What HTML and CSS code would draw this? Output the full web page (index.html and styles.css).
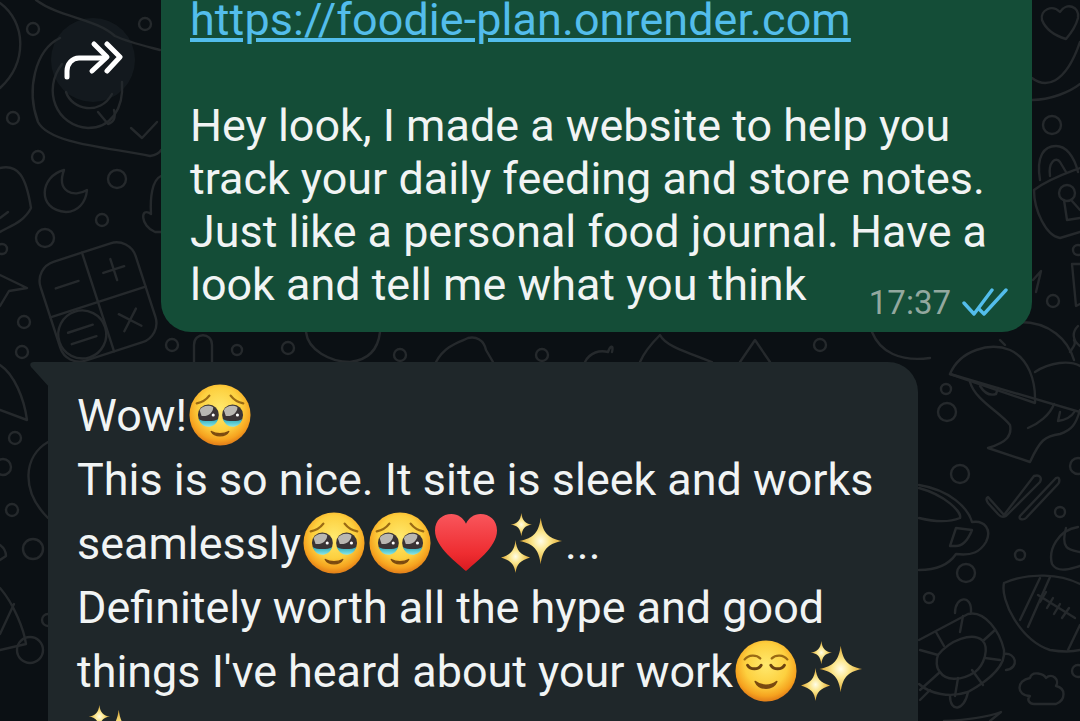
FILE: index.html
```html
<!DOCTYPE html>
<html lang="en">
<head>
    <meta charset="UTF-8">
    <title>Chat</title>
    <link rel="stylesheet" href="styles.css">
</head>
<body>

    <!-- Emoji set, reused by the messages -->
    <svg class="defs" width="0" height="0" aria-hidden="true">
        <defs>
            <radialGradient id="skin" cx="50%" cy="40%" r="58%">
                <stop offset="0" stop-color="#ffe96e"/>
                <stop offset="0.6" stop-color="#fdd03f"/>
                <stop offset="0.88" stop-color="#f6a31f"/>
                <stop offset="1" stop-color="#e5841a"/>
            </radialGradient>
            <linearGradient id="tear" x1="0" y1="0" x2="0" y2="1">
                <stop offset="0" stop-color="#27a7b8"/>
                <stop offset="1" stop-color="#8be6e6"/>
            </linearGradient>
            <linearGradient id="red" x1="0" y1="0" x2="0" y2="1">
                <stop offset="0" stop-color="#f9565c"/>
                <stop offset="0.7" stop-color="#ee2c30"/>
                <stop offset="1" stop-color="#d81a20"/>
            </linearGradient>
            <radialGradient id="spark" cx="50%" cy="50%" r="50%">
                <stop offset="0" stop-color="#fffde8"/>
                <stop offset="0.4" stop-color="#fbe68c"/>
                <stop offset="1" stop-color="#dca52e"/>
            </radialGradient>
            <symbol id="e-plead" viewBox="0 0 64 64">
                <circle cx="32" cy="32" r="31.5" fill="url(#skin)"/>
                <path d="M8 20C13 19 18 16 21 12M56 20C51 19 46 16 43 12" fill="none" stroke="#9a6a14" stroke-width="2.4" stroke-linecap="round"/>
                <circle cx="20" cy="32" r="10.8" fill="#3a3436"/>
                <circle cx="45" cy="32" r="10.8" fill="#3a3436"/>
                <path d="M11 27C13 23 20 21 25 24C25 30 19 34 13 33Z" fill="#b9b7b2"/>
                <path d="M36 27C38 23 45 21 50 24C50 30 44 34 38 33Z" fill="#b9b7b2"/>
                <circle cx="25" cy="32" r="1.6" fill="#fff"/>
                <circle cx="50" cy="32" r="1.6" fill="#fff"/>
                <path d="M10 36C14 39 26 39 30 36C28 42 24 44 20 44C15 44 12 41 10 36Z" fill="url(#tear)"/>
                <path d="M35 36C39 39 51 39 55 36C53 42 49 44 45 44C40 44 37 41 35 36Z" fill="url(#tear)"/>
                <path d="M23 49C28 52 36 52 41 49C38 55 26 55 23 49Z" fill="#7a4a10" stroke="#7a4a10" stroke-width="1.4" stroke-linejoin="round"/>
            </symbol>
            <symbol id="e-relieved" viewBox="0 0 64 64">
                <circle cx="32" cy="32" r="31.5" fill="url(#skin)"/>
                <path d="M10 20C14 15 22 15 26 19M38 19C42 15 50 15 54 20" fill="none" stroke="#9a6a14" stroke-width="2.4" stroke-linecap="round"/>
                <path d="M13 26C16 31 24 31 27 26M37 26C40 31 48 31 51 26" fill="none" stroke="#6b4210" stroke-width="3" stroke-linecap="round"/>
                <path d="M21 43C27 48 37 48 43 43C39 52 25 52 21 43Z" fill="#7a4a10" stroke="#7a4a10" stroke-width="1.8" stroke-linejoin="round"/>
            </symbol>
            <symbol id="e-heart" viewBox="0 0 64 64">
                <path d="M32 61C24 53 0 37 0 19C0 8 8 2 17 2C24 2 29 6 32 12C35 6 40 2 47 2C56 2 64 8 64 19C64 37 40 53 32 61Z" fill="url(#red)"/>
            </symbol>
            <symbol id="e-spark" viewBox="0 0 64 64">
                <path d="M21 1C22 9 25 12 32 13C25 14 22 17 21 25C20 17 17 14 10 13C17 12 20 9 21 1Z" fill="url(#spark)"/>
                <path d="M41 6C43 21 48 27 63 30C48 33 43 39 41 54C39 39 34 33 19 30C34 27 39 21 41 6Z" fill="url(#spark)"/>
                <path d="M15 29C16 40 20 44 30 47C20 50 16 54 15 63C14 54 10 50 0 47C10 44 14 40 15 29Z" fill="url(#spark)"/>
            </symbol>
        </defs>
    </svg>

    <!-- Wallpaper doodles -->
    <svg class="wallpaper" viewBox="0 0 1080 721" aria-hidden="true">
        <g fill="none" stroke="#25292c" stroke-width="2.4" stroke-linecap="round" stroke-linejoin="round">
            <!-- top left -->
            <path d="M0 3C26 22 28 62 0 88"/>
            <path d="M36 0C60 18 95 18 115 36C128 42 145 46 160 50"/>
            <path d="M60 38C35 50 26 90 38 122C50 145 115 148 150 156C156 155 160 152 161 150"/>
            <path d="M62 64C42 90 56 126 88 128C110 128 124 110 122 82"/>
            <path d="M66 92C72 110 100 116 112 94"/>
            <path d="M98 112L108 124C114 122 116 118 114 110"/>
            <path d="M131 128L142 138L157 122"/>
            <path d="M64 170C40 176 36 210 66 212C78 212 86 202 87 190C74 198 56 192 64 170Z"/>
            <path d="M0 168C18 164 26 176 31 208C24 222 10 226 0 232"/>
            <path d="M0 218L8 212"/>
            <path d="M161 176C152 180 150 198 151 214C140 206 140 226 155 232L161 232"/>
            <circle cx="33" cy="29" r="6"/><circle cx="145" cy="24" r="6"/><circle cx="13" cy="118" r="6"/>
            <circle cx="38" cy="157" r="6"/><circle cx="117" cy="179" r="9"/><circle cx="102" cy="220" r="6"/>
            <circle cx="45" cy="238" r="9"/><circle cx="24" cy="322" r="6"/><circle cx="2" cy="249" r="5"/>
            <circle cx="22" cy="352" r="6"/>
            <path d="M0 275L27 288L9 291L0 306"/>
            <!-- calculator -->
            <g transform="rotate(-18 98 302)">
                <rect x="48" y="250" width="100" height="104" rx="20"/>
                <path d="M98 250V354M48 302H148"/>
                <path d="M62 276H86M112 276H134M123 265V287"/>
                <path d="M114 320L132 338M132 320L114 338"/>
                <circle cx="73" cy="328" r="24"/>
                <path d="M60 322H86M60 334H86"/>
            </g>
            <!-- gap between the bubbles -->
            <circle cx="172" cy="345" r="6"/><circle cx="237" cy="350" r="5"/><circle cx="288" cy="348" r="6"/>
            <circle cx="400" cy="355" r="6"/><circle cx="542" cy="355" r="6"/><circle cx="820" cy="345" r="6"/>
            <path d="M194 362V345C194 332 212 332 212 345V362"/>
            <path d="M306 332C308 350 330 362 350 362C368 360 378 350 380 332"/>
            <path d="M436 362C445 345 460 342 468 338C476 336 484 340 486 350L493 362"/>
            <path d="M585 362C590 352 600 350 608 352C610 346 614 344 612 352"/>
            <path d="M640 362C645 350 655 340 660 335C665 345 680 350 712 362"/>
            <path d="M740 362L755 340L770 362"/>
            <path d="M872 332C880 352 900 362 930 358"/>
            <!-- left of the grey bubble -->
            <path d="M0 365C14 374 24 398 27 420L0 410"/>
            <path d="M48 442C24 456 20 490 48 518"/>
            <circle cx="15" cy="438" r="6"/><circle cx="12" cy="510" r="6"/><circle cx="33" cy="549" r="10"/>
            <circle cx="30" cy="650" r="13"/><circle cx="3" cy="467" r="8"/><circle cx="48" cy="620" r="6"/>
            <path d="M0 588C14 604 24 630 26 644L0 650M14 604L0 634"/>
            <path d="M0 545C4 548 6 552 6 556L0 560"/>
            <!-- top right -->
            <path d="M1042 20C1040 10 1052 4 1060 12C1066 2 1080 6 1078 18C1076 26 1072 32 1066 39C1056 36 1046 30 1042 20Z"/>
            <path d="M1032 78C1045 88 1065 86 1080 42M1032 100C1050 100 1070 92 1080 84"/>
            <circle cx="1052" cy="125" r="9"/>
            <path d="M1040 180C1036 156 1044 146 1056 146C1066 146 1074 156 1078 172"/>
            <path d="M1050 176C1048 162 1056 156 1060 162L1066 172"/>
            <path d="M1034 190C1050 178 1070 172 1080 168M1034 190C1034 210 1046 236 1060 238L1080 232"/>
            <circle cx="1067" cy="193" r="8"/>
            <path d="M1064 200L1067 220L1080 218M1072 201L1080 210"/>
            <path d="M1033 280L1041 271L1036 292"/>
            <circle cx="1053" cy="301" r="6"/>
            <path d="M1072 264L1076 306L1080 304M1072 264H1080"/>
            <circle cx="1078" cy="250" r="5"/>
            <path d="M1020 322C1050 322 1068 340 1074 360"/>
            <path d="M1078 326C1072 332 1072 340 1080 346"/>
            <!-- right of the grey bubble -->
            <path d="M950 374C960 350 990 342 1010 350C1028 358 1036 380 1035 403Z"/>
            <path d="M950 374L1080 412"/>
            <path d="M1035 372C1050 362 1070 360 1080 366"/>
            <path d="M970 382C975 400 1000 412 1010 425C1012 435 1008 442 988 448L1030 462C1040 440 1045 436 1060 434C1072 430 1076 424 1080 410"/>
            <path d="M980 386C985 394 990 396 996 394L998 388"/>
            <path d="M1028 428C1038 424 1050 415 1054 404M1060 412L1058 421C1066 420 1072 416 1075 411"/>
            <path d="M1005 345L1000 340M1070 352C1074 346 1076 344 1074 340"/>
            <circle cx="946" cy="389" r="5"/><circle cx="947" cy="412" r="9"/><circle cx="960" cy="474" r="9"/>
            <circle cx="1060" cy="512" r="5"/><circle cx="1020" cy="555" r="5"/><circle cx="966" cy="573" r="9"/>
            <circle cx="929" cy="598" r="5"/><circle cx="1078" cy="466" r="8"/><circle cx="1078" cy="671" r="6"/>
            <path d="M988 497L1004 515L1034 476C1040 474 1042 478 1040 482L1006 516C1002 518 1000 516 998 514L988 503C986 500 986 498 988 497Z"/>
            <path d="M1020 516L1056 478C1060 476 1060 482 1058 484L1026 518C1024 520 1018 520 1020 516Z"/>
            <path d="M1078 527C1058 530 1048 550 1052 564C1058 574 1072 568 1080 566"/>
            <path d="M1066 528C1060 550 1070 550 1080 552"/>
            <path d="M919 485C950 490 968 508 972 522C985 520 992 530 986 542C980 552 972 556 956 554C948 566 934 570 919 570"/>
            <path d="M919 488C945 495 962 512 960 518C950 522 935 522 919 518"/>
            <path d="M956 528L972 530C968 540 962 546 956 546L950 546Z"/>
            <!-- football -->
            <path d="M1004 583C1030 572 1060 574 1080 584M1004 583C1000 600 1020 640 1050 650C1062 652 1072 652 1080 650"/>
            <path d="M1020 620L1040 578M1028 627L1050 577"/>
            <path d="M1038 595L1075 618M1046 592L1040 602M1053 598L1047 608M1060 604L1054 614M1069 608L1062 618"/>
            <path d="M1080 625L1068 650"/>
            <!-- cloud -->
            <path d="M1030 696C1016 696 1016 680 1030 678C1032 670 1044 674 1046 678C1052 672 1060 680 1056 686C1066 688 1066 700 1056 704L1034 704C1030 704 1026 700 1030 696Z"/>
            <!-- turtle -->
            <path d="M919 640L968 614C985 610 1000 632 1004 650C1006 665 990 680 968 692C950 698 930 694 919 684"/>
            <path d="M920 650L938 655C950 640 972 632 982 640C990 648 984 665 975 672C960 682 945 680 940 672C936 668 936 660 938 655"/>
            <path d="M936 632L944 646M963 616L960 632M995 630L984 640M1000 660L985 658M972 670L983 685M958 678L955 696M940 672L920 690"/>
            <path d="M955 613C955 596 972 594 971 612M1004 654C1016 652 1020 668 1006 670M950 696C950 712 964 712 968 692"/>
            <path d="M920 700L930 690"/>
            <path d="M944 721C965 720 985 718 1001 712L990 721"/>
        </g>
    </svg>

    <div class="chat">
        <!-- Forward button -->
        <div class="forward">
            <svg width="60" height="40" viewBox="0 0 60 40" fill="none" stroke="#fff" stroke-width="5" stroke-linecap="round" stroke-linejoin="round">
                <path d="M4 37V31C4 24 9 18 16 18H42"/>
                <path d="M31 4L44 17L29 31"/>
                <path d="M44 4L57 17L44 31"/>
            </svg>
        </div>

        <div class="bubble sent">
            <a class="link" href="#">https://foodie-plan.onrender.com</a><br>
            <br>
            Hey look, I made a website to help you<br>
            track your daily feeding and store notes.<br>
            Just like a personal food journal. Have a<br>
            <div class="last-row">
                <span>look and tell me what you think</span>
                <span class="meta">
                    <span class="time">17:37</span>
                    <svg width="46" height="28" viewBox="0 0 46 28" fill="none" stroke="#53bdeb" stroke-width="3.4" stroke-linecap="round" stroke-linejoin="round">
                        <path d="M2 15L12 26L30 2"/>
                        <path d="M17 21L22 26L44 2"/>
                    </svg>
                </span>
            </div>
        </div>

        <div class="received">
            <svg class="tail" width="20" height="26" viewBox="0 0 20 26"><path d="M20 0H4C0 0 -1 3 2 6L20 26Z" fill="#1f272a"/></svg>
            <div class="bubble received-text">
                Wow!<svg class="emoji"><use href="#e-plead"/></svg><br>
                This is so nice. It site is sleek and works<br>
                seamlessly<svg class="emoji"><use href="#e-plead"/></svg><svg class="emoji"><use href="#e-plead"/></svg><svg class="emoji"><use href="#e-heart"/></svg><svg class="emoji"><use href="#e-spark"/></svg>...<br>
                Definitely worth all the hype and good<br>
                things I've heard about your work<svg class="emoji"><use href="#e-relieved"/></svg><svg class="emoji"><use href="#e-spark"/></svg><br>
                <svg class="emoji"><use href="#e-spark"/></svg>
            </div>
        </div>
    </div>

</body>
</html>
```

FILE: styles.css
```css
html, body {
    margin: 0;
    height: 721px;
    overflow: hidden;
}

body {
    position: relative;
    background-color: #0b1014;
    font-family: "Roboto", sans-serif;
    color: #f1f4f4;
}

.defs {
    position: absolute;
}

.wallpaper {
    position: absolute;
    top: 0;
    left: 0;
    width: 1080px;
    height: 721px;
}

.chat {
    position: relative;
    display: flex;
    flex-direction: column;
    gap: 30px;
    height: 721px;
}

.forward {
    position: absolute;
    top: 18px;
    left: 51px;
    width: 84px;
    height: 84px;
    border-radius: 50%;
    background-color: rgba(32, 40, 46, 0.4);
    display: flex;
    align-items: center;
    justify-content: center;
}

.bubble {
    font-size: 44.9px;
    box-sizing: border-box;
}

.sent {
    align-self: flex-end;
    width: 871px;
    margin-top: -7px;
    margin-right: 48px;
    padding: 0 24px 21px 29px;
    line-height: 53px;
    background-color: #144d37;
    border-radius: 0 0 30px 30px;
}

.link {
    color: #53bdeb;
    letter-spacing: 0.1px;
}

.last-row {
    display: flex;
    justify-content: space-between;
    align-items: flex-end;
}

.meta {
    display: flex;
    align-items: center;
    gap: 11px;
    height: 46px;
    margin-bottom: -14px;
}

.time {
    font-size: 33px;
    color: #93a89f;
}

.received {
    position: relative;
    flex: 1;
    min-height: 0;
    width: 870px;
    margin-left: 48px;
}

.received-text {
    height: 100%;
    overflow: hidden;
    padding: 22px 30px 0 29px;
    line-height: 64px;
    background-color: #1f272a;
    border-radius: 0 30px 0 0;
}

.tail {
    position: absolute;
    top: 0;
    left: -18px;
}

.emoji {
    width: 62px;
    height: 62px;
    margin: 0 2px;
    vertical-align: -15px;
}
```
